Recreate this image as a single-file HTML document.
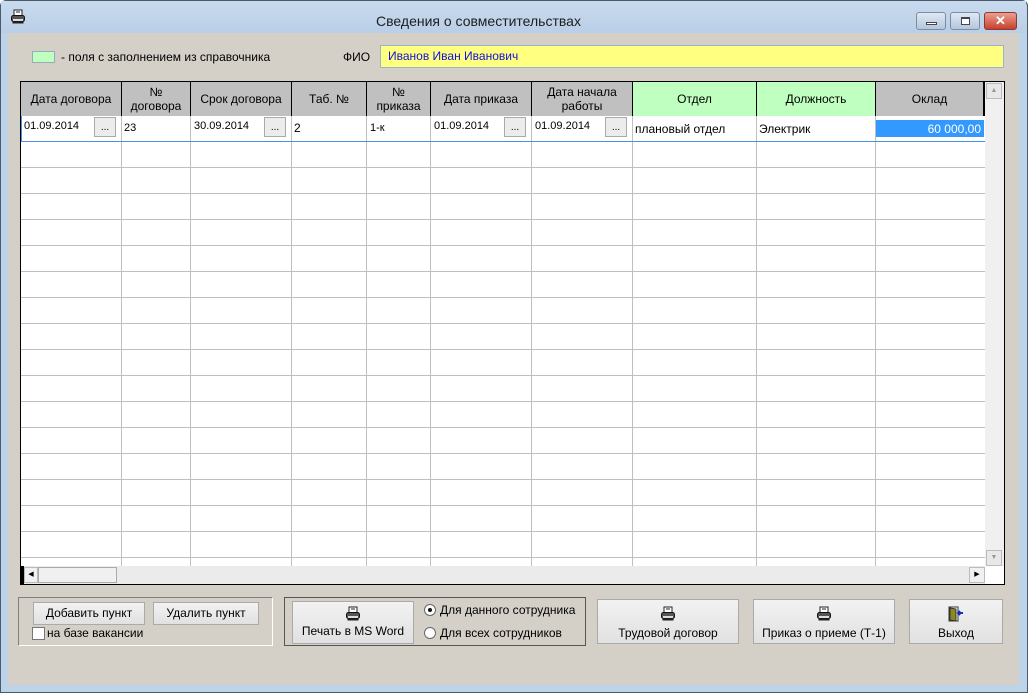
<!DOCTYPE html>
<html><head><meta charset="utf-8"><style>
*{margin:0;padding:0;box-sizing:border-box}
body{width:1028px;height:693px;overflow:hidden;background:#fff;font-family:"Liberation Sans",sans-serif;font-size:12px;color:#000;position:relative}
.a{position:absolute}
.win{left:0;top:0;width:1028px;height:693px;background:#bcd3ea;border:1px solid #4a5a6a;border-radius:6px 6px 0 0}
.title{left:1px;top:1px;width:1025px;height:32px;background:linear-gradient(#c9daee,#b9cfe7)}
.client{left:8px;top:33px;width:1011px;height:652px;background:#d4d0c8}
.btn{position:absolute;background:linear-gradient(#f2f2f2,#e1e1e1);border:1px solid #aaa;text-align:center;font-size:12px}
.hd{position:absolute;top:82px;height:34px;background:#c0c0c0;border-right:1px solid #000;text-align:center;font-size:12px;line-height:14px;display:flex;align-items:center;justify-content:center}
.vl{position:absolute;top:116px;height:450px;width:1px;background:#bfbfbf}
.cell{position:absolute;top:116px;font-size:11px}
.dots{position:absolute;top:117px;width:22px;height:20px;background:#ececec;border:1px solid #aaa;font-size:10px;text-align:center;line-height:20px}
.pr{display:block;margin:0 auto}
</style></head><body>
<svg width="0" height="0" style="position:absolute"><defs><symbol id="p" viewBox="0 0 16 16"><rect x="4" y="1" width="8" height="6" fill="#fff" stroke="#222"/><line x1="6" y1="3" x2="10" y2="3" stroke="#222"/><rect x="1.5" y="6.5" width="13" height="6" rx="2" fill="#555" stroke="#111"/><rect x="3" y="10" width="10" height="2" fill="#ddd"/><rect x="2.5" y="12.5" width="11" height="2" fill="#222"/></symbol></defs></svg>
<div class="a win"></div>
<div class="a title"></div>
<svg class="a" style="left:10px;top:9px" width="16" height="16"><use href="#p"/></svg>
<div class="a" style="left:0;width:957px;top:13px;text-align:center;font-size:14px;color:#1e1e1e">Сведения о совместительствах</div>
<div class="a" style="left:916px;top:12px;width:30px;height:18px;border:1px solid #7a8ca0;border-radius:3px;background:linear-gradient(#dfe8f3,#b5c7dc)"><div class="a" style="left:9px;top:9px;width:11px;height:3px;background:#fff;border:1px solid #445"></div></div>
<div class="a" style="left:950px;top:12px;width:30px;height:18px;border:1px solid #7a8ca0;border-radius:3px;background:linear-gradient(#dfe8f3,#b5c7dc)"><div class="a" style="left:10px;top:4px;width:9px;height:8px;border:1px solid #445;border-top-width:2px;background:#fff"></div></div>
<div class="a" style="left:984px;top:12px;width:33px;height:18px;border:1px solid #8a3a30;border-radius:3px;background:linear-gradient(#e9a090,#c8402c);color:#fff;font-weight:bold;text-align:center;line-height:16px;font-size:13px">✕</div>
<div class="a client"></div>

<div class="a" style="left:32px;top:51px;width:23px;height:12px;background:#bfffbf;border:1px solid #9ab"></div>
<div class="a" style="left:61px;top:50px">- поля с заполнением из справочника</div>
<div class="a" style="left:343px;top:50px">ФИО</div>
<div class="a" style="left:380px;top:45px;width:624px;height:23px;background:#ffff80;border:1px solid #99b4d1;color:#1010e0;padding:3px 0 0 7px">Иванов Иван Иванович</div>

<div class="a" style="left:20px;top:81px;width:985px;height:504px;background:#fff;border:1px solid #000"></div>
<div class="a" style="left:21px;top:142px;width:964px;height:424px;background:repeating-linear-gradient(to bottom,transparent 0,transparent 25px,#bfbfbf 25px,#bfbfbf 26px)"></div>
<div class="hd" style="left:21px;width:101px">Дата договора</div>
<div class="hd" style="left:122px;width:69px">№<br>договора</div>
<div class="hd" style="left:191px;width:101px">Срок договора</div>
<div class="hd" style="left:292px;width:75px">Таб. №</div>
<div class="hd" style="left:367px;width:64px">№<br>приказа</div>
<div class="hd" style="left:431px;width:101px">Дата приказа</div>
<div class="hd" style="left:532px;width:101px">Дата начала<br>работы</div>
<div class="hd" style="left:633px;width:124px;background:#bfffbf">Отдел</div>
<div class="hd" style="left:757px;width:119px;background:#bfffbf">Должность</div>
<div class="hd" style="left:876px;width:109px;border-right:2px solid #000">Оклад</div>
<div class="vl" style="left:121px"></div><div class="vl" style="left:190px"></div><div class="vl" style="left:291px"></div><div class="vl" style="left:366px"></div><div class="vl" style="left:430px"></div><div class="vl" style="left:531px"></div><div class="vl" style="left:632px"></div><div class="vl" style="left:756px"></div><div class="vl" style="left:875px"></div>
<div class="a" style="left:21px;top:141px;width:964px;height:1px;background:#4a90e0"></div>
<div class="a" style="left:21px;top:116px;width:1px;height:26px;background:#4a90e0"></div>
<div class="cell" style="left:24px;top:120px">01.09.2014</div><div class="dots" style="left:94px">...</div>
<div class="cell" style="left:124px;top:122px">23</div>
<div class="cell" style="left:194px;top:120px">30.09.2014</div><div class="dots" style="left:264px">...</div>
<div class="cell" style="left:294px;top:121px;font-size:12px">2</div>
<div class="cell" style="left:370px;top:122px">1-к</div>
<div class="cell" style="left:434px;top:120px">01.09.2014</div><div class="dots" style="left:504px">...</div>
<div class="cell" style="left:535px;top:120px">01.09.2014</div><div class="dots" style="left:605px">...</div>
<div class="cell" style="left:635px;top:122px;font-size:12px">плановый отдел</div>
<div class="cell" style="left:759px;top:122px;font-size:12px">Электрик</div>
<div class="a" style="left:876px;top:118px;width:108px;height:21px;background:#3399ff;border-top:2px solid #fff;border-bottom:2px solid #fff;color:#fff;text-align:right;padding:2px 3px 0 0;font-size:12px">60 000,00</div>
<div class="a" style="left:985px;top:82px;width:19px;height:484px;background:#f0f0f0"></div>
<div class="a" style="left:986px;top:83px;width:16px;height:16px;background:#e8e8e8;border:1px solid #bbb;font-size:7px;color:#999;text-align:center;line-height:14px">▲</div>
<div class="a" style="left:986px;top:550px;width:16px;height:16px;background:#e8e8e8;border:1px solid #bbb;font-size:7px;color:#999;text-align:center;line-height:14px">▼</div>
<div class="a" style="left:21px;top:566px;width:964px;height:18px;background:#ebebeb"></div>
<div class="a" style="left:21px;top:566px;width:3px;height:18px;background:#000"></div>
<div class="a" style="left:24px;top:567px;width:14px;height:16px;background:#f0f0f0;border:1px solid #bbb;font-size:7px;text-align:center;line-height:14px">◀</div>
<div class="a" style="left:38px;top:567px;width:79px;height:16px;background:#f0f0f0;border:1px solid #aaa"></div>
<div class="a" style="left:969px;top:567px;width:16px;height:16px;background:#f0f0f0;border:1px solid #bbb;font-size:7px;text-align:center;line-height:14px">▶</div>

<div class="a" style="left:18px;top:597px;width:255px;height:49px;border:1px solid #808080;border-right-color:#fff;border-bottom-color:#fff"></div>
<div class="btn" style="left:33px;top:602px;width:112px;height:23px;line-height:21px">Добавить пункт</div>
<div class="btn" style="left:153px;top:602px;width:106px;height:23px;line-height:21px">Удалить пункт</div>
<div class="a" style="left:32px;top:627px;width:13px;height:13px;background:#fff;border:1px solid #777"></div>
<div class="a" style="left:47px;top:626px">на базе вакансии</div>

<div class="a" style="left:284px;top:597px;width:302px;height:49px;border:1px solid #555"></div>
<div class="btn" style="left:292px;top:601px;width:122px;height:43px"><svg class="pr" style="margin-top:4px" width="16" height="16"><use href="#p"/></svg><div style="margin-top:2px">Печать в MS Word</div></div>
<div class="a" style="left:424px;top:604px;width:12px;height:12px;border-radius:50%;background:#fff;border:1px solid #666"><div class="a" style="left:3px;top:3px;width:4px;height:4px;border-radius:50%;background:#111"></div></div>
<div class="a" style="left:440px;top:603px">Для данного сотрудника</div>
<div class="a" style="left:424px;top:627px;width:12px;height:12px;border-radius:50%;background:#fff;border:1px solid #666"></div>
<div class="a" style="left:440px;top:626px">Для всех сотрудников</div>

<div class="btn" style="left:597px;top:599px;width:142px;height:45px"><svg class="pr" style="margin-top:6px" width="16" height="16"><use href="#p"/></svg><div style="margin-top:4px">Трудовой договор</div></div>
<div class="btn" style="left:753px;top:599px;width:142px;height:45px"><svg class="pr" style="margin-top:6px" width="16" height="16"><use href="#p"/></svg><div style="margin-top:4px">Приказ о приеме (Т-1)</div></div>
<div class="btn" style="left:909px;top:599px;width:94px;height:45px"><svg class="pr" style="margin-top:6px" width="16" height="16"><rect x="1" y="1" width="9" height="14" fill="#fff" stroke="#333"/><path d="M2 2 L8 3 L8 15 L2 14Z" fill="#8a8a20" stroke="#333"/><path d="M10 7 H15 M12 5 L10 7 L12 9" stroke="#1030c0" stroke-width="2" fill="none"/></svg><div style="margin-top:4px">Выход</div></div>
</body></html>
